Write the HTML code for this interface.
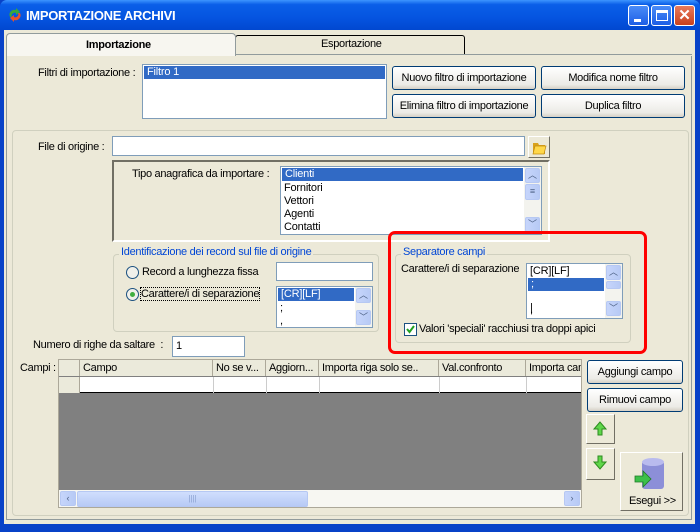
<!DOCTYPE html>
<html><head><meta charset="utf-8"><style>
*{box-sizing:border-box;margin:0;padding:0}
body{width:700px;height:532px;overflow:hidden;background:#0842c8;font-family:"Liberation Sans",sans-serif;font-size:11px;color:#000;position:relative}
.a{position:absolute}
.t{position:absolute;white-space:nowrap;letter-spacing:-0.3px;font-size:11px}
.win{left:4px;top:30px;width:691px;height:494px;background:#ece9d8}
.title{left:0;top:0;width:700px;height:30px;background:linear-gradient(#3d95ff 0%,#0a5fe8 15%,#0554e0 60%,#0148d0 100%);border-radius:7px 7px 0 0}
.tb{width:21px;height:21px;top:5px;border:1px solid #fff;border-radius:3px;background:linear-gradient(#4a8cf7,#1d5ee6)}
.btn{position:absolute;border:1px solid #003c74;border-radius:3px;background:linear-gradient(#fff,#ecebe6 80%,#d6d0c5);text-align:center;letter-spacing:-0.3px}
.inp{position:absolute;background:#fff;border:1px solid #7f9db9}
.sel{background:#316ac5;color:#fff}
.sb{position:absolute;width:17px;background:#f3f3ee}
.sbb{position:absolute;left:1px;width:15px;height:15px;border:1px solid #b6c8f3;border-radius:2px;background:linear-gradient(90deg,#c6d5fb,#b7caf5);color:#4d6185;font-size:9px;text-align:center;line-height:13px}
.gb{position:absolute;border:1px solid #d0d0bf;border-radius:4px}
.gt{position:absolute;background:#ece9d8;color:#0046d5;padding:0 2px;letter-spacing:-0.3px;white-space:nowrap}
.row{height:13px;line-height:13px;padding-left:3px;white-space:nowrap;letter-spacing:-0.2px}
.hd{position:absolute;top:0;height:16px;border-right:1px solid #aca899;background:#ebeadb;padding-left:3px;line-height:16px;white-space:nowrap;overflow:hidden;letter-spacing:-0.3px}
</style></head><body>
<div class="a title"></div>
<div class="a" style="left:8px;top:8px;width:14px;height:14px"><svg width="14" height="14"><path d="M2 9 A5 5 0 0 1 8 2 L8 0 L12 4 L8 7 L8 5 A3 3 0 0 0 4 9Z" fill="#3aa63a"/><path d="M12 5 A5 5 0 0 1 6 12 L6 14 L2 10 L6 7 L6 9 A3 3 0 0 0 10 5Z" fill="#e8532a"/></svg></div>
<div class="t" style="left:26px;top:8px;color:#fff;font-weight:bold;font-size:13px">IMPORTAZIONE ARCHIVI</div>
<div class="a tb" style="left:628px"><div class="a" style="left:5px;top:13px;width:7px;height:3px;background:#fff"></div></div>
<div class="a tb" style="left:651px"><div class="a" style="left:4px;top:4px;width:12px;height:11px;border:1px solid #fff;border-top-width:3px"></div></div>
<div class="a tb" style="left:674px;background:linear-gradient(#e87a5c,#c9401c);color:#fff;font-size:15px;text-align:center;line-height:19px;font-weight:bold">✕</div>
<div class="a win"></div>
<!-- tabs -->
<div class="a" style="left:235px;top:35px;width:230px;height:20px;border:1px solid #000;border-bottom:none;border-radius:3px 3px 0 0;background:#ece9d8"></div>
<div class="t" style="left:321px;top:38px">Esportazione</div>
<div class="a" style="left:6px;top:33px;width:230px;height:23px;border:1px solid #919b9c;border-bottom:none;border-radius:4px 4px 0 0;background:#f7f6f0"></div>
<div class="t" style="left:86px;top:39px;font-weight:bold">Importazione</div>
<div class="a" style="left:6px;top:54px;width:686px;height:466px;border:1px solid #919b9c;border-top:none;background:#ece9d8;top:56px;height:464px"></div>
<div class="a" style="left:236px;top:54px;width:456px;border-top:1px solid #919b9c"></div>
<!-- filtri -->
<div class="t" style="left:38px;top:67px">Filtri di importazione :</div>
<div class="inp" style="left:142px;top:64px;width:245px;height:55px"><div class="row sel" style="margin:1px;width:241px">Filtro 1</div></div>
<div class="btn" style="left:392px;top:66px;width:144px;height:24px;line-height:22px">Nuovo filtro di importazione</div>
<div class="btn" style="left:541px;top:66px;width:144px;height:24px;line-height:22px">Modifica nome filtro</div>
<div class="btn" style="left:392px;top:94px;width:144px;height:24px;line-height:22px">Elimina filtro di importazione</div>
<div class="btn" style="left:541px;top:94px;width:144px;height:24px;line-height:22px">Duplica filtro</div>
<!-- main group -->
<div class="gb" style="left:12px;top:130px;width:677px;height:386px"></div>
<div class="t" style="left:38px;top:141px">File di origine :</div>
<div class="inp" style="left:112px;top:136px;width:413px;height:20px"></div>
<div class="a" style="left:528px;top:136px;width:22px;height:22px;border:1px solid #fff;border-right-color:#716f64;border-bottom-color:#716f64;background:#ece9d8"><svg width="20" height="20"><path d="M4 6h5l1 2h6v9H4z" fill="#d9a21c"/><path d="M6 9h11l-2 8H4z" fill="#ffd84a" stroke="#c08a10" stroke-width=".7"/></svg></div>
<div class="a" style="left:112px;top:160px;width:438px;height:82px;border:2px solid #fff;border-top-color:#716f64;border-left-color:#716f64"></div>
<div class="t" style="left:132px;top:168px">Tipo anagrafica da importare :</div>
<div class="inp" style="left:280px;top:166px;width:262px;height:69px;overflow:hidden">
<div class="row sel" style="margin:1px;width:241px">Clienti</div>
<div class="row">Fornitori</div><div class="row">Vettori</div><div class="row">Agenti</div><div class="row">Contatti</div></div>
<div class="sb" style="left:524px;top:167px;height:67px"><div class="sbb" style="top:1px">︿</div><div class="sbb" style="top:17px;height:16px">≡</div><div class="sbb" style="top:50px">﹀</div></div>
<!-- identificazione -->
<div class="gb" style="left:113px;top:254px;width:266px;height:78px"></div>
<div class="gt" style="left:119px;top:246px">Identificazione dei record sul file di origine</div>
<div class="a" style="left:126px;top:266px;width:13px;height:13px;border:1px solid #1c5180;border-radius:50%;background:#f0f0ea"></div>
<div class="t" style="left:142px;top:266px">Record a lunghezza fissa</div>
<div class="inp" style="left:276px;top:262px;width:97px;height:19px"></div>
<div class="a" style="left:126px;top:288px;width:13px;height:13px;border:1px solid #1c5180;border-radius:50%;background:#f0f0ea"><div class="a" style="left:3px;top:3px;width:5px;height:5px;border-radius:50%;background:#3fae3f"></div></div>
<div class="t" style="left:141px;top:288px;outline:1px dotted #000">Carattere/i di separazione</div>
<div class="inp" style="left:276px;top:286px;width:97px;height:42px;overflow:hidden"><div class="row sel" style="margin:1px;width:76px">[CR][LF]</div><div class="row">;</div><div class="row">,</div></div>
<div class="sb" style="left:355px;top:287px;height:40px"><div class="sbb" style="top:1px">︿</div><div class="sbb" style="top:23px">﹀</div></div>
<!-- separatore -->
<div class="gb" style="left:395px;top:254px;width:236px;height:89px"></div>
<div class="gt" style="left:401px;top:246px">Separatore campi</div>
<div class="t" style="left:401px;top:263px">Carattere/i di separazione</div>
<div class="inp" style="left:526px;top:263px;width:97px;height:56px;overflow:hidden"><div class="row" style="margin-top:1px">[CR][LF]</div><div class="row sel" style="margin-left:1px;width:76px">;</div><div class="row"></div><div class="row">,<br></div></div>
<div class="t" style="left:530px;top:302px">|</div>
<div class="sb" style="left:605px;top:264px;height:54px"><div class="sbb" style="top:1px">︿</div><div class="sbb" style="top:17px;height:8px"></div><div class="sbb" style="top:37px">﹀</div></div>
<div class="a" style="left:404px;top:323px;width:13px;height:13px;border:1px solid #1c5180;background:#fff"><svg width="11" height="11"><path d="M2 5l2.5 3L9 2" stroke="#21a121" stroke-width="2" fill="none"/></svg></div>
<div class="t" style="left:419px;top:323px">Valori 'speciali' racchiusi tra doppi apici</div>
<div class="a" style="left:388px;top:231px;width:259px;height:123px;border:3px solid #f00;border-radius:7px"></div>
<!-- numero -->
<div class="t" style="left:33px;top:339px">Numero di righe da saltare &nbsp;:</div>
<div class="inp" style="left:172px;top:336px;width:73px;height:21px;padding:3px"> 1</div>
<!-- grid -->
<div class="t" style="left:20px;top:362px">Campi :</div>
<div class="a" style="left:58px;top:359px;width:524px;height:149px;background:#808080;border:1px solid #aca899;overflow:hidden">
<div class="a" style="left:0;top:0;width:524px;height:16px;background:#ebeadb;border-bottom:1px solid #000"></div>
<div class="hd" style="left:0;width:21px"></div>
<div class="hd" style="left:21px;width:133px">Campo</div>
<div class="hd" style="left:154px;width:53px">No se v...</div>
<div class="hd" style="left:207px;width:53px">Aggiorn...</div>
<div class="hd" style="left:260px;width:120px">Importa riga solo se..</div>
<div class="hd" style="left:380px;width:87px">Val.confronto</div>
<div class="hd" style="left:467px;width:60px">Importa cam</div>
<div class="a" style="left:0;top:17px;width:524px;height:16px;background:#fff;border-bottom:1px solid #000"></div>
<div class="a" style="left:0;top:17px;width:21px;height:16px;background:#ebeadb;border-right:1px solid #aca899"></div>
<div class="a" style="left:154px;top:17px;height:16px;border-left:1px solid #ccc"></div>
<div class="a" style="left:207px;top:17px;height:16px;border-left:1px solid #ccc"></div>
<div class="a" style="left:260px;top:17px;height:16px;border-left:1px solid #ccc"></div>
<div class="a" style="left:380px;top:17px;height:16px;border-left:1px solid #ccc"></div>
<div class="a" style="left:467px;top:17px;height:16px;border-left:1px solid #ccc"></div>
<div class="a" style="left:0;top:130px;width:524px;height:18px;background:#f7f7f2">
<div class="sbb" style="top:1px;left:1px;width:16px">‹</div>
<div class="a" style="left:18px;top:1px;width:231px;height:16px;border:1px solid #b6c8f3;border-radius:2px;background:linear-gradient(#d0defd,#b7caf5);text-align:center;color:#8aa0d0;font-size:8px;line-height:14px">||||</div>
<div class="sbb" style="top:1px;left:505px;width:16px">›</div></div>
</div>
<div class="btn" style="left:587px;top:360px;width:96px;height:24px;line-height:22px">Aggiungi campo</div>
<div class="btn" style="left:587px;top:388px;width:96px;height:24px;line-height:22px">Rimuovi campo</div>
<div class="a" style="left:586px;top:414px;width:29px;height:30px;border:1px solid #fff;border-right-color:#716f64;border-bottom-color:#716f64"><svg width="27" height="28"><path d="M13 7l-6 7h4v6h4v-6h4z" fill="#5fd64a" stroke="#2d8a1f"/></svg></div>
<div class="a" style="left:586px;top:448px;width:29px;height:32px;border:1px solid #fff;border-right-color:#716f64;border-bottom-color:#716f64"><svg width="27" height="30"><path d="M11 7h4v6h4l-6 7-6-7h4z" fill="#5fd64a" stroke="#2d8a1f"/></svg></div>
<div class="a" style="left:620px;top:452px;width:63px;height:59px;border:1px solid #fff;border-right-color:#716f64;border-bottom-color:#716f64">
<svg width="62" height="40" style="position:absolute;left:0;top:0"><rect x="21" y="8" width="22" height="28" rx="3" fill="#8c8fd8"/><ellipse cx="32" cy="9" rx="11" ry="4" fill="#b9bbee"/><path d="M14 23h8v-5l8 8-8 8v-5h-8z" fill="#3cc04a" stroke="#1e7a24" stroke-width=".8"/></svg>
<div class="t" style="left:8px;top:42px">Esegui &gt;&gt;</div></div>
</body></html>
